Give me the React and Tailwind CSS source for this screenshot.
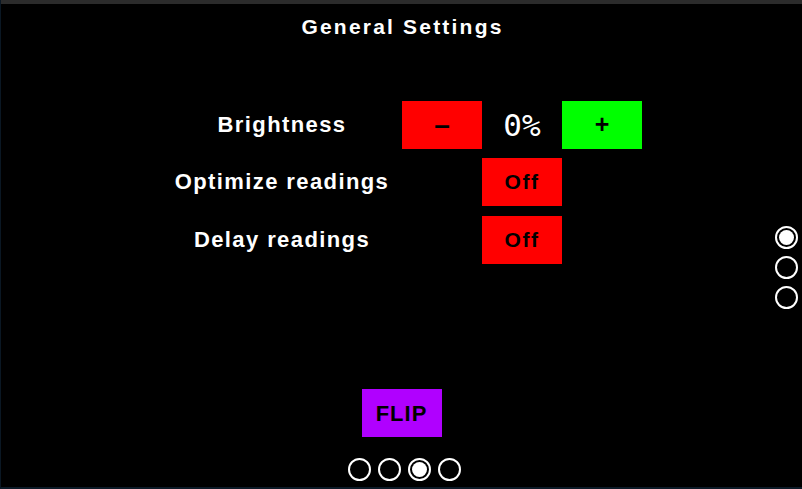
import { useState } from "react";

const label = "text-white font-bold text-[22px] tracking-[1.4px] leading-none";
const btn = "w-[80px] h-[48px] flex items-center justify-center text-black font-bold";

function Dot({ active }) {
  return (
    <div className="w-[23px] h-[23px] rounded-full border-2 border-white p-[2px]">
      {active && <div className="w-full h-full rounded-full bg-white" />}
    </div>
  );
}

export default function App() {
  const [brightness, setBrightness] = useState(0);
  const [optimize, setOptimize] = useState(false);
  const [delay, setDelay] = useState(false);

  return (
    <div
      className="w-[802px] h-[489px] bg-black flex flex-col border-l border-l-[#0a1723] border-b-2 border-b-[#0c1a27]"
      style={{ fontFamily: '"Liberation Sans", Arial, sans-serif' }}
    >
      <div className="h-[4px] bg-[#2b2b2b]" />

      <div className="h-[45px] flex items-center justify-center pl-[2px]">
        <h1 className="text-white font-bold text-[21px] tracking-[2.2px] leading-none">General Settings</h1>
      </div>

      <div className="flex-1 grid grid-cols-[1fr_auto_1fr]">
        <div />
        <div className="pt-[52px] pl-[1px] flex flex-col">
          <div className="grid grid-cols-[240px_80px_80px_80px] items-center">
            <span className={label + " text-center"}>Brightness</span>
            <button
              className={btn + " bg-[#ff0000] text-[28px]"}
              onClick={() => setBrightness((b) => Math.max(0, b - 10))}
            >
              –
            </button>
            <span
              className="text-white text-[31px] leading-none text-center"
              style={{ fontFamily: '"DejaVu Sans Mono", monospace' }}
            >
              {brightness}%
            </span>
            <button
              className={btn + " bg-[#00ff00] text-[25px]"}
              onClick={() => setBrightness((b) => Math.min(100, b + 10))}
            >
              +
            </button>
          </div>

          <div className="grid grid-cols-[240px_80px_80px_80px] items-center mt-[9px]">
            <span className={label + " text-center"}>Optimize readings</span>
            <div />
            <button className={btn + " bg-[#ff0000] text-[21px] tracking-[1.5px]"} onClick={() => setOptimize(!optimize)}>
              {optimize ? "On" : "Off"}
            </button>
          </div>

          <div className="grid grid-cols-[240px_80px_80px_80px] items-center mt-[10px]">
            <span className={label + " text-center"}>Delay readings</span>
            <div />
            <button className={btn + " bg-[#ff0000] text-[21px] tracking-[1.5px]"} onClick={() => setDelay(!delay)}>
              {delay ? "On" : "Off"}
            </button>
          </div>
        </div>
        <div className="flex flex-col items-end gap-[7px] pt-[177px] pr-[4px]">
          <Dot active />
          <Dot />
          <Dot />
        </div>
      </div>

      <div className="flex flex-col items-center pb-[6px]">
        <button className={btn + " bg-[#b000ff] text-[22px] tracking-[1px]"}>FLIP</button>
        <div className="flex gap-[7px] mt-[21px] ml-[5px]">
          <Dot />
          <Dot />
          <Dot active />
          <Dot />
        </div>
      </div>
    </div>
  );
}
